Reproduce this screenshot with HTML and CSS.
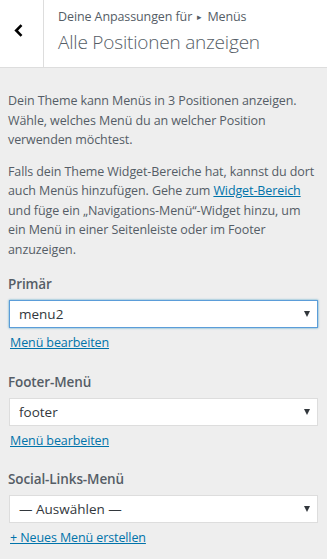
FILE: index.html
```html
<!DOCTYPE html>
<html lang="de">
<head>
  <meta charset="UTF-8">
  <title>Alle Positionen anzeigen</title>
  <meta name="viewport" content="width=device-width, initial-scale=1.0">
  <link rel="stylesheet" href="styles.css">
</head>
<body>

<div class="panel-head">
  <button class="back" aria-label="Zurück">
    <svg width="9" height="13" viewBox="0 0 9 13"><path d="M7.5 1.2 L2.2 6.5 L7.5 11.8" fill="none" stroke="#000" stroke-width="2.6"/></svg>
  </button>
  <div class="head-title">
    <span class="crumb">Deine Anpassungen für <span class="sep">&#9656;</span> Menüs</span>
    <h2>Alle Positionen anzeigen</h2>
  </div>
</div>

<div class="panel-body">
  <p>Dein Theme kann Menüs in 3 Positionen anzeigen. Wähle, welches Menü du an welcher Position verwenden möchtest.</p>
  <p>Falls dein Theme Widget-Bereiche hat, kannst du dort auch Menüs hinzufügen. Gehe zum <a class="nowrap" href="#">Widget-Bereich</a> und füge ein „Navigations-Menü“-Widget hinzu, um ein Menü in einer Seitenleiste oder im Footer anzuzeigen.</p>

  <div class="control">
    <label for="loc-primary">Primär</label>
    <div class="select-wrap focus">
      <select id="loc-primary">
        <option>menu2</option>
      </select>
    </div>
    <a class="edit-link" href="#">Menü bearbeiten</a>
  </div>

  <div class="control">
    <label for="loc-footer">Footer-Menü</label>
    <div class="select-wrap">
      <select id="loc-footer">
        <option>footer</option>
      </select>
    </div>
    <a class="edit-link" href="#">Menü bearbeiten</a>
  </div>

  <div class="control">
    <label for="loc-social">Social-Links-Menü</label>
    <div class="select-wrap">
      <select id="loc-social">
        <option>— Auswählen —</option>
      </select>
    </div>
    <a class="edit-link" href="#">+ Neues Menü erstellen</a>
  </div>
</div>

</body>
</html>
```

FILE: styles.css
```css
body {
  margin: 0;
  background-color: #eee;
  font-family: 'Open Sans', 'Noto Sans', sans-serif;
  color: #555d66;
  letter-spacing: -0.1px;
  overflow: hidden;
}

.panel-head {
  display: flex;
  height: 67px;
  background-color: #fff;
  border-bottom: 1px solid #ddd;
}

.back {
  width: 44px;
  flex: none;
  border: 0;
  border-right: 1px solid #ddd;
  background: #fff;
  padding: 0 0 6px 14px;
  display: flex;
  align-items: center;
}

.head-title {
  padding: 7px 0 0 14px;
}

.crumb {
  display: block;
  font-size: 12.5px;
  line-height: 20px;
}

.sep {
  font-size: 9px;
  vertical-align: 1px;
  margin: 0 2px;
}

.head-title h2 {
  margin: 0;
  font-size: 19px;
  font-weight: 300;
  line-height: 30px;
  letter-spacing: -0.2px;
}

.panel-body {
  padding: 23px 9px 0 8px;
}

.panel-body p {
  margin: 0 0 12px;
  font-size: 12.5px;
  line-height: 19.5px;
}

a {
  color: #0073aa;
}

.nowrap {
  white-space: nowrap;
}

.control {
  margin-top: 15px;
  margin-bottom: 19px;
}

.control + .control {
  margin-top: 0;
}

.control label {
  display: block;
  font-size: 13.5px;
  font-weight: 600;
  line-height: 20px;
  margin-bottom: 6px;
}

.select-wrap {
  position: relative;
  margin-left: 1px;
}

.select-wrap::after {
  content: "";
  position: absolute;
  right: 8px;
  top: 11px;
  border-left: 3px solid transparent;
  border-right: 3px solid transparent;
  border-top: 6px solid #32373c;
  pointer-events: none;
}

.select-wrap select {
  appearance: none;
  -webkit-appearance: none;
  width: 100%;
  height: 28px;
  box-sizing: border-box;
  margin: 0;
  padding: 0 24px 0 9px;
  border: 1px solid #ddd;
  border-radius: 0;
  background-color: #fff;
  font-family: inherit;
  font-size: 13.5px;
  color: #32373c;
}

.select-wrap.focus select {
  border-color: #5b9dd9;
  box-shadow: 0 0 2px rgba(30, 140, 190, 0.8);
}

.edit-link {
  display: inline-block;
  margin: 5px 0 0 2px;
  font-size: 12.5px;
  line-height: 19.5px;
}
```
